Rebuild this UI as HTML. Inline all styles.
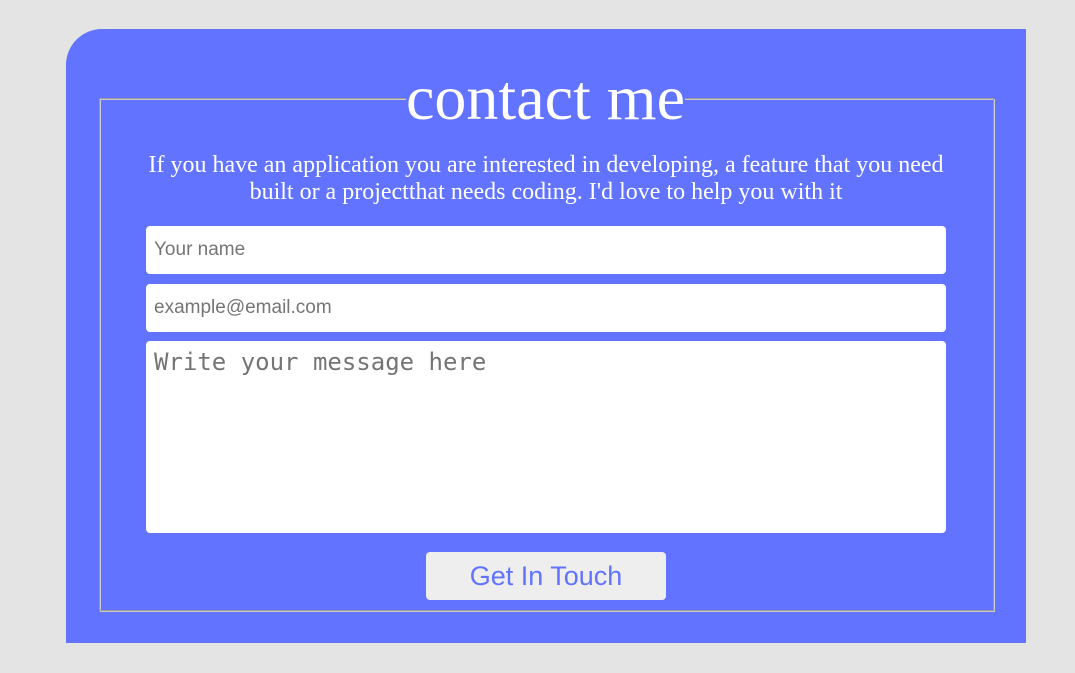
<!DOCTYPE html>
<html><head><style>
body{margin:0;width:1075px;height:673px;background:#e4e4e4;position:relative;overflow:hidden;font-family:"Liberation Sans",sans-serif}
.card{position:absolute;left:66px;top:29px;width:960px;height:614px;background:#6173ff;border-top-left-radius:36px}
.fs{position:absolute;left:99px;top:98px;width:893px;height:511px;border:1px solid #999;box-shadow:1px 1px 0 #ccc inset, 1px 1px 0 #ccc}
.legend{position:absolute;left:406px;top:58px;width:279px;height:80px;background:#6173ff;color:#fff;font-family:"Liberation Serif",serif;font-size:64px;line-height:80px;text-align:center;white-space:nowrap}
.p{position:absolute;left:146px;width:800px;top:152px;color:#fff;font-family:"Liberation Serif",serif;font-size:24px;line-height:27px;text-align:center}
.in{position:absolute;left:146px;width:800px;background:#fff;border-radius:4px;color:#757575;box-sizing:border-box;padding-left:8px}
.btn{position:absolute;left:426px;top:552px;width:240px;height:48px;background:#eee;border-radius:4px;color:#6173ff;font-size:27px;line-height:48px;text-align:center}
</style></head><body>
<div class="card"></div>
<div class="fs"></div>
<div class="legend">contact me</div>
<div class="p">If you have an application you are interested in developing, a feature that you need built or a projectthat needs coding. I'd love to help you with it</div>
<div class="in" style="top:226px;height:48px;line-height:48px;font-size:19px">Your name</div>
<div class="in" style="top:284px;height:48px;line-height:48px;font-size:19px">example@email.com</div>
<div class="in" style="top:341px;height:192px;font-family:'DejaVu Sans Mono','Liberation Mono',monospace;font-size:24px;padding-top:6px;line-height:30px">Write your message here</div>
<div class="btn">Get In Touch</div>
</body></html>
